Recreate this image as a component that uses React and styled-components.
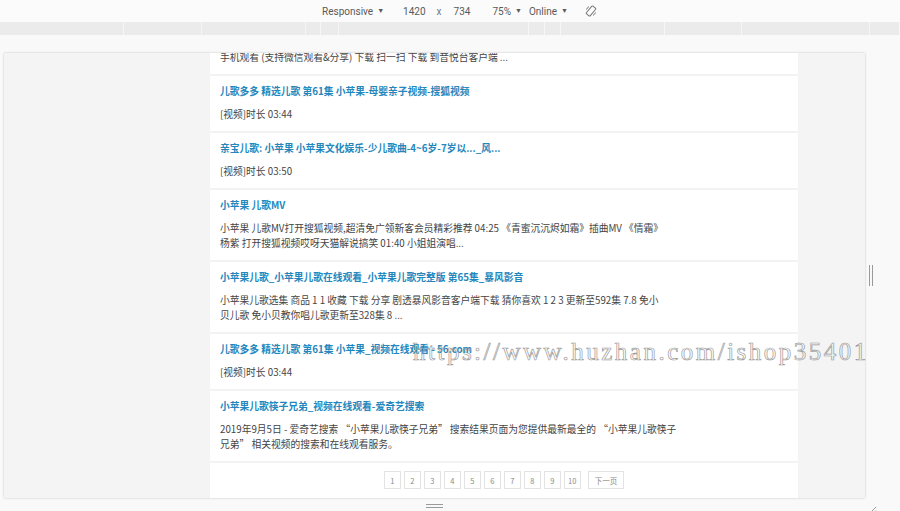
import styled, { createGlobalStyle } from "styled-components";

const GlobalStyle = createGlobalStyle`
  html, body {
    margin: 0;
    padding: 0;
    background: #f9f9f9;
  }
`;

const Page = styled.div`
  position: relative;
  width: 900px;
  height: 511px;
  display: flex;
  flex-direction: column;
  background: #f9f9f9;
  overflow: hidden;
  font-family: Roboto, "Liberation Sans", sans-serif;
`;

const Toolbar = styled.div`
  flex: none;
  height: 22px;
  display: flex;
  align-items: center;
  padding-left: 322px;
  background: #fbfbfb;
  font-size: 10px;
  color: #5a5a5a;
`;

const ToolItem = styled.span`
  display: flex;
  align-items: center;
  margin-left: ${(p) => p.$gap || 0}px;
  color: ${(p) => (p.$muted ? "#777" : "#5a5a5a")};
`;

const Caret = styled.span`
  font-size: 7px;
  margin-left: 4px;
`;

const MediaBar = styled.div`
  flex: none;
  height: 13px;
  display: flex;
  background: #ebebeb;
`;

const Segment = styled.div`
  width: ${(p) => p.$w}px;
  flex: ${(p) => (p.$w ? "none" : 1)};
  border-right: 1px solid #f6f6f6;
  box-sizing: border-box;
  background: ${(p) => p.$shade || "#ebebeb"};
`;

const Stage = styled.div`
  flex: none;
  display: grid;
  grid-template-columns: 4px 861px 1fr;
  grid-template-rows: 445px 13px;
  padding-top: 18px;
`;

const Device = styled.div`
  grid-column: 2;
  grid-row: 1;
  background: #f4f4f4;
  box-shadow: 0 0 2px rgba(0, 0, 0, 0.22);
  display: flex;
  padding-left: 206px;
  overflow: hidden;
`;

const Gutter = styled.div`
  grid-column: 3;
  grid-row: 1;
  display: flex;
  align-items: center;
  padding-left: 4px;
`;

const VHandle = styled.div`
  width: 2px;
  height: 21px;
  border-left: 1px solid #9a9a9a;
  border-right: 1px solid #9a9a9a;
`;

const BottomStrip = styled.div`
  grid-column: 2;
  grid-row: 2;
  display: flex;
  justify-content: center;
  padding-top: 6px;
`;

const HHandle = styled.div`
  width: 17px;
  height: 2px;
  border-top: 1px solid #9a9a9a;
  border-bottom: 1px solid #9a9a9a;
`;

const Corner = styled.div`
  grid-column: 3;
  grid-row: 2;
  padding: 2px 0 0 3px;
`;

const Column = styled.div`
  width: 588px;
  background: #fff;
  display: flex;
  flex-direction: column;
  font-family: "Noto Sans CJK SC", "Liberation Sans", sans-serif;
`;

const Result = styled.div`
  padding: ${(p) => (p.$partial ? "0" : "7px")} 10px 9px;
  margin-top: ${(p) => (p.$partial ? "-3px" : "0")};
  border-bottom: 2px solid #f3f3f3;
`;

const Title = styled.a`
  display: block;
  font-size: 9.75px;
  line-height: 16px;
  font-weight: 700;
  color: #2387bd;
  text-decoration: none;
  white-space: nowrap;
  margin-bottom: 8px;
`;

const Line = styled.div`
  font-size: 9.75px;
  line-height: 15px;
  color: #444;
  white-space: nowrap;
`;

const Pager = styled.div`
  display: flex;
  justify-content: center;
  gap: 3px;
  padding-top: 8px;
`;

const PageBtn = styled.span`
  min-width: 17px;
  height: 18px;
  padding: 0 ${(p) => (p.$wide ? 6 : 0)}px;
  margin-left: ${(p) => (p.$wide ? 4 : 0)}px;
  box-sizing: border-box;
  border: 1px solid #e3e3e3;
  display: flex;
  align-items: center;
  justify-content: center;
  font-size: 7.5px;
  color: #8a8a8a;
`;

const Watermark = styled.div`
  position: absolute;
  left: 413px;
  top: 338px;
  font-family: "Liberation Serif", serif;
  font-size: 25px;
  letter-spacing: 2.5px;
  color: transparent;
  -webkit-text-stroke: 0.7px #9c9c9c;
  white-space: nowrap;
  pointer-events: none;
`;

const segments = [124, 78, 104, 15, 18, 190, 16, 16, 104, 77, 128, 0];

const results = [
  {
    partial: true,
    lines: ["手机观看 (支持微信观看&分享) 下载 扫一扫 下载 到音悦台客户端 ..."],
  },
  {
    title: "儿歌多多 精选儿歌 第61集 小苹果-母婴亲子视频-搜狐视频",
    lines: ["[视频]时长 03:44"],
  },
  {
    title: "亲宝儿歌: 小苹果 小苹果文化娱乐-少儿歌曲-4~6岁-7岁以..._风...",
    lines: ["[视频]时长 03:50"],
  },
  {
    title: "小苹果 儿歌MV",
    lines: [
      "小苹果 儿歌MV打开搜狐视频,超清免广领新客会员精彩推荐 04:25 《青蜜沉沉烬如霜》插曲MV 《情霜》",
      "杨紫 打开搜狐视频哎呀天猫解说搞笑 01:40 小姐姐演唱...",
    ],
  },
  {
    title: "小苹果儿歌_小苹果儿歌在线观看_小苹果儿歌完整版 第65集_暴风影音",
    lines: [
      "小苹果儿歌选集 商品 1 1 收藏 下载 分享 剧透暴风影音客户端下载 猜你喜欢 1 2 3 更新至592集 7.8 免小",
      "贝儿歌 免小贝教你唱儿歌更新至328集 8 ...",
    ],
  },
  {
    title: "儿歌多多 精选儿歌 第61集 小苹果_视频在线观看 - 56.com",
    lines: ["[视频]时长 03:44"],
  },
  {
    title: "小苹果儿歌筷子兄弟_视频在线观看-爱奇艺搜索",
    lines: [
      "2019年9月5日 - 爱奇艺搜索 “小苹果儿歌筷子兄弟” 搜索结果页面为您提供最新最全的 “小苹果儿歌筷子",
      "兄弟” 相关视频的搜索和在线观看服务。",
    ],
  },
];

const RotateIcon = () => (
  <svg width="12" height="12" viewBox="0 0 12 12" fill="none" stroke="#777" strokeWidth="1">
    <rect x="3.5" y="1" width="5" height="10" rx="1" transform="rotate(40 6 6)" />
    <path d="M1.5 4.5 A5 5 0 0 1 4 1.6" />
    <path d="M10.5 7.5 A5 5 0 0 1 8 10.4" />
  </svg>
);

const CornerIcon = () => (
  <svg width="9" height="9" viewBox="0 0 9 9" stroke="#9a9a9a" strokeWidth="1">
    <path d="M1 8 L8 1" />
    <path d="M4.5 8 L8 4.5" />
  </svg>
);

export default function App() {
  return (
    <Page>
      <GlobalStyle />
      <Toolbar>
        <ToolItem>
          Responsive<Caret>▼</Caret>
        </ToolItem>
        <ToolItem $gap={19}>1420</ToolItem>
        <ToolItem $gap={11} $muted>x</ToolItem>
        <ToolItem $gap={12}>734</ToolItem>
        <ToolItem $gap={22}>
          75%<Caret>▼</Caret>
        </ToolItem>
        <ToolItem $gap={7}>
          Online<Caret>▼</Caret>
        </ToolItem>
        <ToolItem $gap={17}>
          <RotateIcon />
        </ToolItem>
      </Toolbar>
      <MediaBar>
        {segments.map((w, i) => (
          <Segment key={i} $w={w} />
        ))}
      </MediaBar>
      <Stage>
        <Device>
          <Column>
            {results.map((r, i) => (
              <Result key={i} $partial={r.partial}>
                {r.title && <Title href="#">{r.title}</Title>}
                {r.lines.map((l, j) => (
                  <Line key={j}>{l}</Line>
                ))}
              </Result>
            ))}
            <Pager>
              {["1", "2", "3", "4", "5", "6", "7", "8", "9", "10"].map((n) => (
                <PageBtn key={n}>{n}</PageBtn>
              ))}
              <PageBtn $wide>下一页</PageBtn>
            </Pager>
          </Column>
        </Device>
        <Gutter>
          <VHandle />
        </Gutter>
        <BottomStrip>
          <HHandle />
        </BottomStrip>
        <Corner>
          <CornerIcon />
        </Corner>
      </Stage>
      <Watermark>https://www.huzhan.com/ishop35401</Watermark>
    </Page>
  );
}
